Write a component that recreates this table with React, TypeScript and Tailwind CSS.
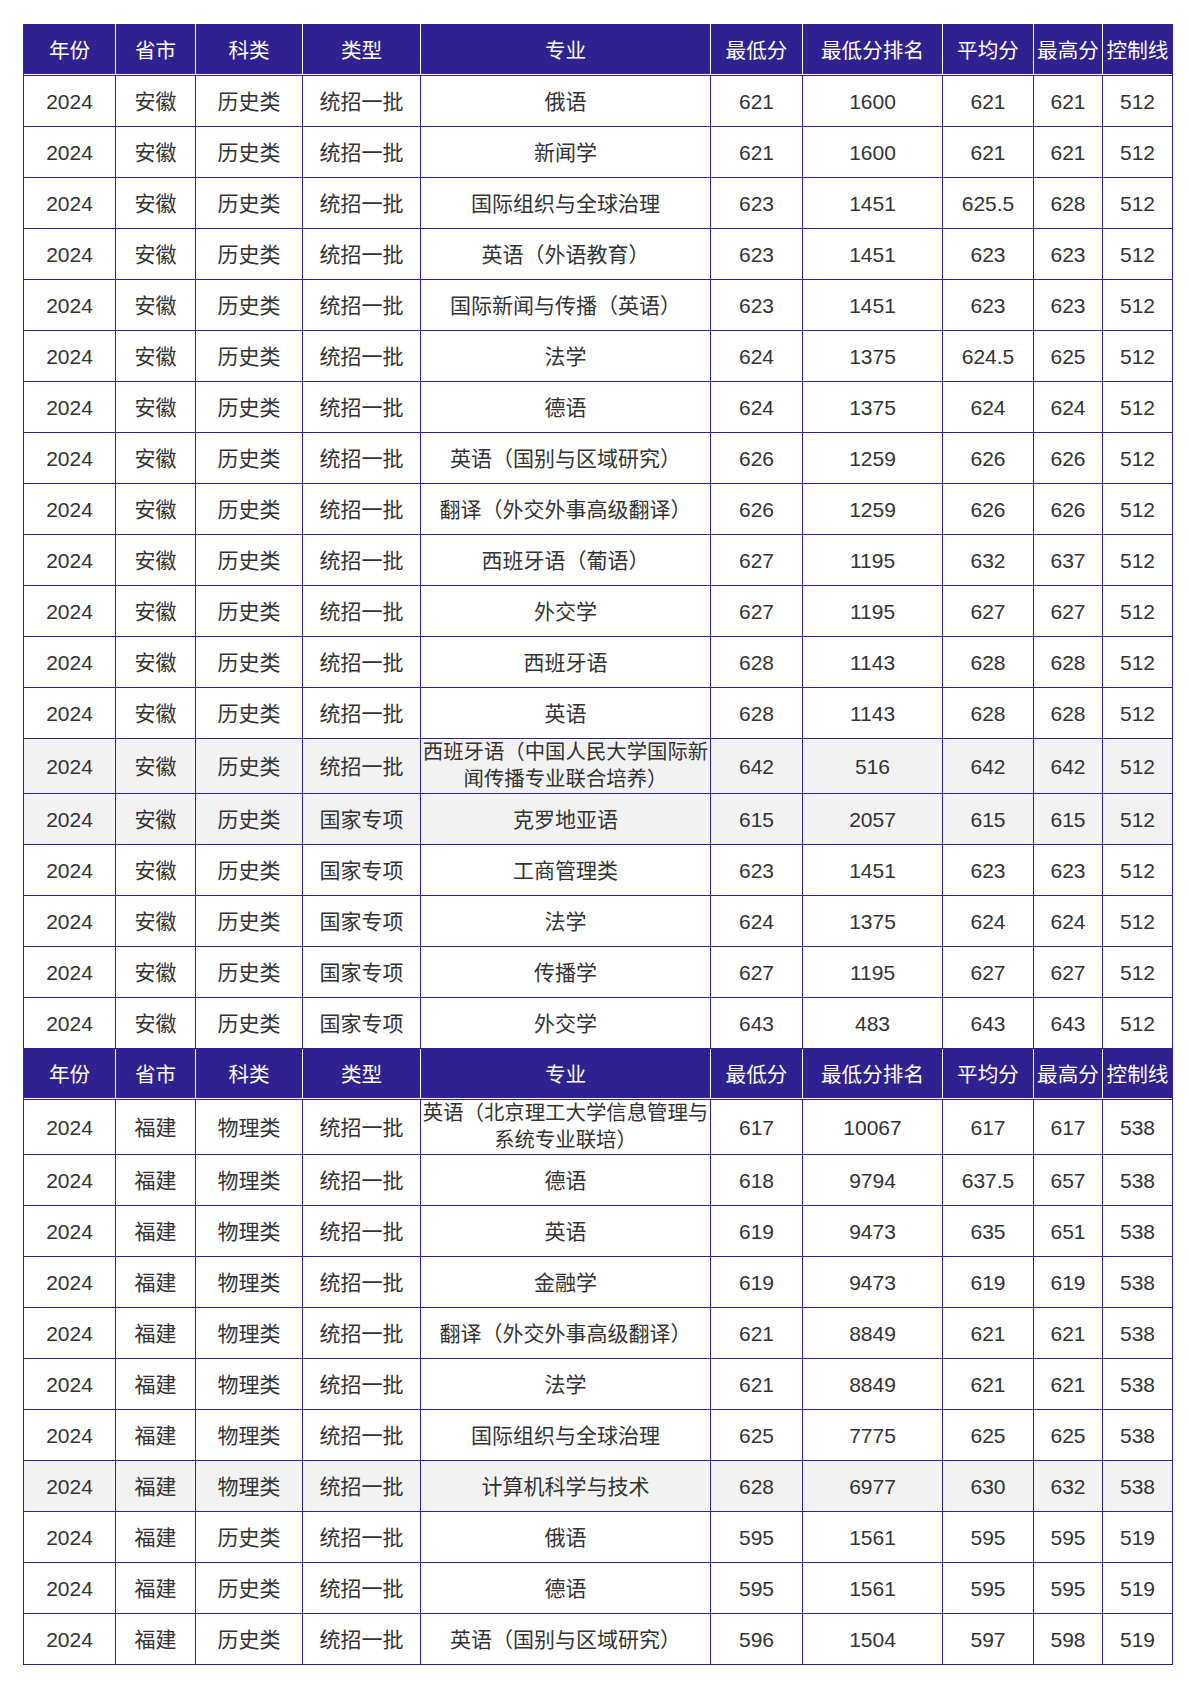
import React from 'react';

type Row = {
  year: string;
  prov: string;
  subject: string;
  batch: string;
  major: string;
  min: string;
  rank: string;
  avg: string;
  max: string;
  line: string;
  gray?: boolean;
};

const headers = ['年份', '省市', '科类', '类型', '专业', '最低分', '最低分排名', '平均分', '最高分', '控制线'];

const colWidths = ['w-[92px]', 'w-[80px]', 'w-[107px]', 'w-[118px]', 'w-[290px]', 'w-[92px]', 'w-[140px]', 'w-[91px]', 'w-[69px]', 'w-[70px]'];

const ah = (batch: string, major: string, min: string, rank: string, avg: string, max: string, gray = false): Row => ({
  year: '2024', prov: '安徽', subject: '历史类', batch, major, min, rank, avg, max, line: '512', gray,
});

const fj = (subject: string, major: string, min: string, rank: string, avg: string, max: string, line: string, gray = false): Row => ({
  year: '2024', prov: '福建', subject, batch: '统招一批', major, min, rank, avg, max, line, gray,
});

const anhui: Row[] = [
  ah('统招一批', '俄语', '621', '1600', '621', '621'),
  ah('统招一批', '新闻学', '621', '1600', '621', '621'),
  ah('统招一批', '国际组织与全球治理', '623', '1451', '625.5', '628'),
  ah('统招一批', '英语（外语教育）', '623', '1451', '623', '623'),
  ah('统招一批', '国际新闻与传播（英语）', '623', '1451', '623', '623'),
  ah('统招一批', '法学', '624', '1375', '624.5', '625'),
  ah('统招一批', '德语', '624', '1375', '624', '624'),
  ah('统招一批', '英语（国别与区域研究）', '626', '1259', '626', '626'),
  ah('统招一批', '翻译（外交外事高级翻译）', '626', '1259', '626', '626'),
  ah('统招一批', '西班牙语（葡语）', '627', '1195', '632', '637'),
  ah('统招一批', '外交学', '627', '1195', '627', '627'),
  ah('统招一批', '西班牙语', '628', '1143', '628', '628'),
  ah('统招一批', '英语', '628', '1143', '628', '628'),
  ah('统招一批', '西班牙语（中国人民大学国际新闻传播专业联合培养）', '642', '516', '642', '642', true),
  ah('国家专项', '克罗地亚语', '615', '2057', '615', '615', true),
  ah('国家专项', '工商管理类', '623', '1451', '623', '623'),
  ah('国家专项', '法学', '624', '1375', '624', '624'),
  ah('国家专项', '传播学', '627', '1195', '627', '627'),
  ah('国家专项', '外交学', '643', '483', '643', '643'),
];

const fujian: Row[] = [
  fj('物理类', '英语（北京理工大学信息管理与系统专业联培）', '617', '10067', '617', '617', '538'),
  fj('物理类', '德语', '618', '9794', '637.5', '657', '538'),
  fj('物理类', '英语', '619', '9473', '635', '651', '538'),
  fj('物理类', '金融学', '619', '9473', '619', '619', '538'),
  fj('物理类', '翻译（外交外事高级翻译）', '621', '8849', '621', '621', '538'),
  fj('物理类', '法学', '621', '8849', '621', '621', '538'),
  fj('物理类', '国际组织与全球治理', '625', '7775', '625', '625', '538'),
  fj('物理类', '计算机科学与技术', '628', '6977', '630', '632', '538', true),
  fj('历史类', '俄语', '595', '1561', '595', '595', '519'),
  fj('历史类', '德语', '595', '1561', '595', '595', '519'),
  fj('历史类', '英语（国别与区域研究）', '596', '1504', '597', '598', '519'),
];

function HeaderRow() {
  return (
    <tr>
      {headers.map((h, i) => (
        <th
          key={h}
          className={
            i === 0
              ? 'h-[51px] p-0 border border-[#2f2191] border-r-white bg-[#2f2191] font-normal text-white text-[20.6px] leading-[27px] shadow-[inset_0_-1px_0_#ffffff]'
              : i === headers.length - 1
              ? 'h-[51px] p-0 border border-[#2f2191] border-l-white bg-[#2f2191] font-normal text-white text-[20.6px] leading-[27px] shadow-[inset_0_-1px_0_#ffffff]'
              : 'h-[51px] p-0 border border-[#2f2191] border-x-white bg-[#2f2191] font-normal text-white text-[20.6px] leading-[27px] shadow-[inset_0_-1px_0_#ffffff]'
          }
        >
          {h}
        </th>
      ))}
    </tr>
  );
}

function DataRow({ r }: { r: Row }) {
  const cells = [r.year, r.prov, r.subject, r.batch, r.major, r.min, r.rank, r.avg, r.max, r.line];
  return (
    <tr className={r.gray ? 'bg-[#f2f2f2]' : 'bg-white'}>
      {cells.map((c, i) => (
        <td
          key={i}
          className={
            c.length > 14
              ? 'h-[51px] p-0 border border-[#2f2191] text-center align-middle text-[20.4px] leading-[27px] text-[#333333]'
              : 'h-[51px] p-0 border border-[#2f2191] text-center align-middle text-[21px] leading-[27px] text-[#333333]'
          }
        >
          {c}
        </td>
      ))}
    </tr>
  );
}

export default function App() {
  return (
    <div
      className="min-h-[1683px] w-[1190px] bg-white pt-[24px] pl-[23px]"
      style={{ fontFamily: '"Liberation Sans", "Noto Sans CJK SC", sans-serif' }}
    >
      <table className="table-fixed border-collapse w-[1149px]">
        <colgroup>
          {colWidths.map((w, i) => (
            <col key={i} className={w} />
          ))}
        </colgroup>
        <tbody>
          <HeaderRow />
          {anhui.map((r, i) => (
            <DataRow key={'a' + i} r={r} />
          ))}
          <HeaderRow />
          {fujian.map((r, i) => (
            <DataRow key={'f' + i} r={r} />
          ))}
        </tbody>
      </table>
    </div>
  );
}
